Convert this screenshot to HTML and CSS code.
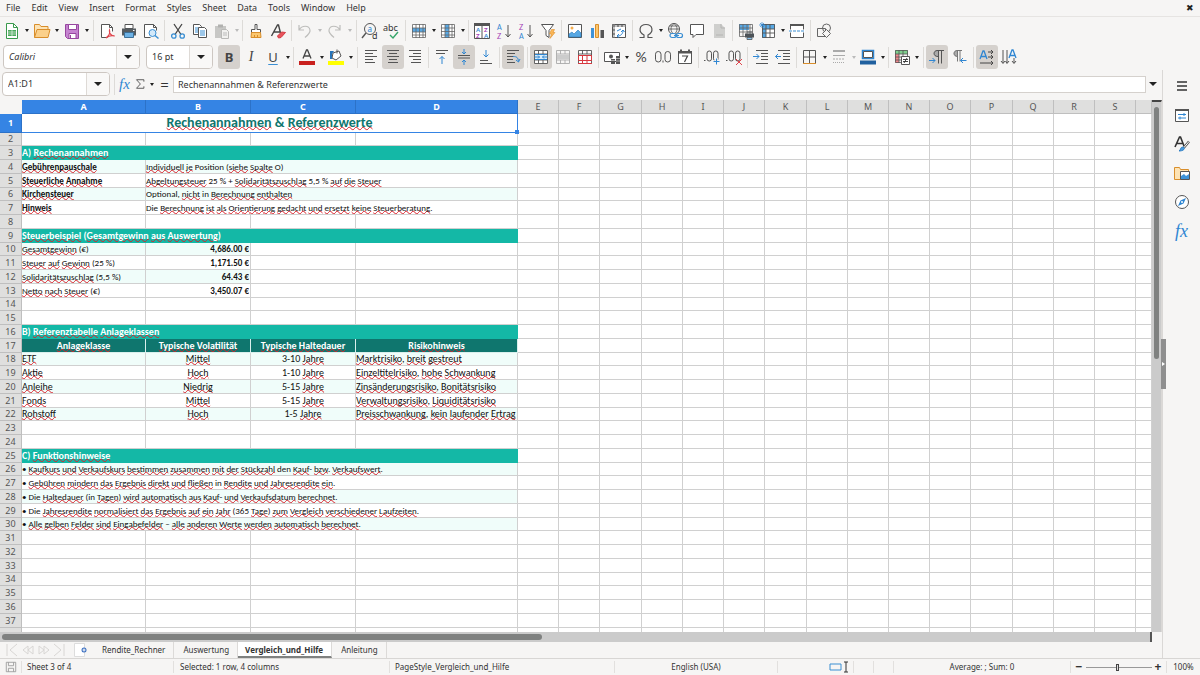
FILE: index.html
```html
<!DOCTYPE html>
<html lang="de">
<head>
<meta charset="utf-8">
<title>Vergleich_und_Hilfe</title>
<link rel="stylesheet" href="styles.css">
</head>
<body>
<div class="app">
<nav class="menubar">
  <button>File</button><button>Edit</button><button>View</button><button>Insert</button><button>Format</button><button>Styles</button><button>Sheet</button><button>Data</button><button>Tools</button><button>Window</button><button>Help</button>
  <button class="close" aria-label="Close">✖</button>
</nav>

<div class="toolbar" role="toolbar" aria-label="Standard">
  <button class="tb" aria-label="New"><svg viewBox="0 0 18 18"><path d="M3.500 1.500h7l4 4v11h-11z" fill="#fff" stroke="#3a9a4c"/><path d="M10.500 1.500v4h4" fill="none" stroke="#3a9a4c"/><path d="M5 8h8v6H5z" fill="#4aa95c"/><path d="M5 10h8M5 12h8M9 8v6" stroke="#fff" stroke-width=".6"/></svg></button><button class="drop wide" aria-label="New options"></button>
  <button class="tb" aria-label="Open"><svg viewBox="0 0 18 18"><path d="M1.500 15.500v-13h5l1.500 2h7v3" fill="#fde3b4" stroke="#d98e2b"/><path d="M1.500 15.500l2.500-8h13l-2 8z" fill="#fbd08a" stroke="#d98e2b"/></svg></button><button class="drop wide" aria-label="Open options"></button>
  <button class="tb" aria-label="Save"><svg viewBox="0 0 18 18"><path d="M2.500 2.500h13v14h-11l-2-2z" fill="#c583d0" stroke="#97479f"/><path d="M5.500 2.500h8v5h-8z" fill="#fff" stroke="#97479f"/><path d="M6 11.500h7v5H6z" fill="#fff" stroke="#97479f"/><path d="M7.500 13v3" stroke="#97479f"/></svg></button><button class="drop wide" aria-label="Save options"></button>
  <i class="sep"></i>
  <button class="tb" aria-label="Export as PDF"><svg viewBox="0 0 18 18"><path d="M9.500 15.500h-6v-13h8l3 3v4" fill="#fff" stroke="#555"/><path d="M11.500 2.500v3h3" fill="none" stroke="#555"/><path d="M8 16c4-3 4-6 3.500-7.500C11 11 13 14 16.500 14c-3-1-6 0-8.500 2z" fill="none" stroke="#e0444c" stroke-width="1.300"/></svg></button>
  <button class="tb" aria-label="Print"><svg viewBox="0 0 18 18"><path d="M5 2.500h8v4H5z" fill="#fff" stroke="#555"/><path d="M2 6.500h14v7H2z" fill="#555b60"/><path d="M4.500 10.500h9v5h-9z" fill="#6db2e6" stroke="#3d6f96"/><path d="M13 8.500h1.500" stroke="#fff"/></svg></button>
  <button class="tb" aria-label="Print preview"><svg viewBox="0 0 18 18"><path d="M8.500 15.500h-6v-13h9l3 3v3" fill="#fff" stroke="#555"/><path d="M11.500 2.500v3h3" fill="none" stroke="#555"/><circle cx="10.500" cy="11" r="3.500" fill="#d3e9fa" stroke="#3b8fd3"/><path d="M13 13.500l3.500 3" stroke="#3b8fd3" stroke-width="1.500"/></svg></button>
  <i class="sep"></i>
  <button class="tb" aria-label="Cut"><svg viewBox="0 0 18 18" fill="none"><path d="M5 2l7 10.500M13 2L6 12.500" stroke="#444" stroke-width="1.300"/><circle cx="4.800" cy="14" r="2.200" stroke="#3b8fd3" stroke-width="1.300"/><circle cx="13.200" cy="14" r="2.200" stroke="#3b8fd3" stroke-width="1.300"/></svg></button>
  <button class="tb" aria-label="Copy"><svg viewBox="0 0 18 18" fill="#fff"><path d="M2.500 2.500h6l2 2v8h-8z" stroke="#555"/><path d="M4 6h4M4 8h4M4 10h4" stroke="#3b8fd3"/><path d="M7.500 5.500h6l2 2v8h-8z" stroke="#555"/><path d="M9 9h5M9 11h5M9 13h5" stroke="#3b8fd3"/></svg></button>
  <button class="tb" aria-label="Paste" disabled><svg viewBox="0 0 18 18"><path d="M2 4h11v12H2z" fill="#c7c7c5"/><path d="M5 2.500h5v3H5z" fill="#b1b1af"/><path d="M8.500 7.500h5l2 2v7h-7z" fill="#f1f1ef" stroke="#b9b9b7"/><path d="M10 11h4M10 13h4" stroke="#bbb"/></svg></button><button class="drop" aria-label="Paste options" disabled></button>
  <i class="sep"></i>
  <button class="tb" aria-label="Clone formatting"><svg viewBox="0 0 18 18"><path d="M8 2.500h2v5h3.500v3h-9v-3H8z" fill="#fff" stroke="#555"/><path d="M4.500 10.500h9l.5 5h-10z" fill="#fbc76f" stroke="#d98e2b"/><path d="M7.500 13v2M10.500 13v2" stroke="#d98e2b"/></svg></button>
  <button class="tb" aria-label="Clear formatting"><svg viewBox="0 0 18 18" fill="none"><path d="M2.500 14L8.500 3h1l2 8M5 10h6" stroke="#444" stroke-width="1.400"/><path d="M8.500 14l4-4 4 .5-4.500 5-2.500.5z" fill="#e8545c" stroke="#d43a43"/></svg></button>
  <i class="sep"></i>
  <button class="tb" aria-label="Undo" disabled><svg viewBox="0 0 18 18" fill="none" stroke="#bdbdbb" stroke-width="1.200"><path d="M3 3v5h5M3 8c3-5 10-5 11 0 .5 3-2 5-5 7.500"/></svg></button><button class="drop wide" aria-label="Undo list" disabled></button>
  <button class="tb" aria-label="Redo" disabled><svg viewBox="0 0 18 18" fill="none" stroke="#bdbdbb" stroke-width="1.200"><path d="M14 3v5H9M14 8C11 3 4 3 3 8c-.5 3 2 5 5 7.500"/></svg></button><button class="drop wide" aria-label="Redo list" disabled></button>
  <i class="sep"></i>
  <button class="tb" aria-label="Find and replace"><svg viewBox="0 0 18 18" fill="none"><circle cx="9" cy="7" r="5.500" stroke="#555"/><path d="M5 11l-4 5" stroke="#555" stroke-width="1.400"/><text x="6.500" y="9.500" font-size="8" fill="#1f7fd0">a</text><text x="11" y="17" font-size="9" fill="#333">d</text></svg></button>
  <button class="tb" aria-label="Spelling"><svg viewBox="0 0 18 18" fill="none"><text x="0" y="9" font-size="9" fill="#333">abc</text><path d="M7 13l3 3 5-6" stroke="#35a56a" stroke-width="1.400"/></svg></button>
  <i class="sep"></i>
  <button class="tb" aria-label="Row"><svg viewBox="0 0 18 18" fill="none"><path d="M2.500 2.500h13v13h-13z" fill="#fff"/><path d="M2 6h14v4H2z" fill="#57a8e4"/><path d="M2.500 2.500h13v13h-13zM2 6h14M2 10h14M2 13h14M6 2v14M9.500 2v14M13 2v14" stroke="#666" stroke-width=".8"/></svg></button><button class="drop" aria-label="Row options"></button>
  <button class="tb" aria-label="Column"><svg viewBox="0 0 18 18" fill="none"><path d="M2.500 2.500h13v13h-13z" fill="#fff"/><path d="M6 2h4v14H6z" fill="#57a8e4"/><path d="M2.500 2.500h13v13h-13zM2 6h14M2 9.500h14M2 13h14M6 2v14M10 2v14M13 2v14" stroke="#666" stroke-width=".8"/></svg></button><button class="drop" aria-label="Column options"></button>
  <i class="sep"></i>
  <button class="tb" aria-label="Sort"><svg viewBox="0 0 18 18"><path d="M1.500 2.500h15v14h-15z" fill="#fff" stroke="#555"/><path d="M1 1h16v3H1z" fill="#555"/><path d="M9 4v12" stroke="#555"/><g class="letters small"><text x="3" y="10" fill="#2f86d2">A</text><text x="3" y="16" fill="#a43fb5">Z</text><text x="11" y="10" fill="#a43fb5">Z</text><text x="11" y="16" fill="#2f86d2">A</text></g></svg></button>
  <button class="tb" aria-label="Sort ascending"><svg viewBox="0 0 18 18" fill="none"><g class="letters"><text x="2" y="8" fill="#2f86d2">A</text><text x="2" y="17" fill="#a43fb5">Z</text></g><path d="M13 3v12M10.500 12l2.500 3 2.500-3" stroke="#555"/></svg></button>
  <button class="tb" aria-label="Sort descending"><svg viewBox="0 0 18 18" fill="none"><g class="letters"><text x="2" y="8" fill="#a43fb5">Z</text><text x="2" y="17" fill="#2f86d2">A</text></g><path d="M13 3v12M10.500 12l2.500 3 2.500-3" stroke="#555"/></svg></button>
  <button class="tb" aria-label="AutoFilter"><svg viewBox="0 0 18 18"><path d="M2.500 2.500h12L10 8.500v7l-3-2v-5z" fill="#fff" stroke="#555"/><path d="M12.500 7.500h3l-1.500 3h2l-5 6 1.500-4.500h-2z" fill="#fbb757" stroke="#dd8f2c" stroke-width=".6"/></svg></button>
  <i class="sep"></i>
  <button class="tb" aria-label="Insert image"><svg viewBox="0 0 18 18"><path d="M2.500 2.500h13v13h-13z" fill="#fff" stroke="#555"/><circle cx="6" cy="6" r="1.500" fill="#f5ad4e"/><path d="M3 15v-3l3-2 2 2 4-4 3 3v4z" fill="#57a8e4" stroke="#2778bd" stroke-width=".6"/></svg></button>
  <button class="tb" aria-label="Insert chart"><svg viewBox="0 0 18 18"><path d="M3 6h3v10H3z" fill="#3f93d8"/><path d="M7.500 2.500h3v13h-3z" fill="#fbc76f" stroke="#d98e2b"/><path d="M12.500 8H16v8h-3.500z" fill="#555"/></svg></button>
  <button class="tb" aria-label="Pivot table"><svg viewBox="0 0 18 18" fill="none"><path d="M2.500 2.500h13v13h-13z" fill="#fff" stroke="#555"/><path d="M2.500 4h13M4 2.500v13" stroke="#888" stroke-width="2" stroke-dasharray="3 1"/><path d="M7 14c4 0 6-2 6-6M7 14l2-2M7 14l2 1.500M13 8l-2 2M13 8l1.500 2M7 9l4-2" stroke="#2f86d2"/></svg></button>
  <i class="sep"></i>
  <button class="tb" aria-label="Special character"><svg viewBox="0 0 18 18" fill="none" stroke="#555" stroke-width="1.200"><path d="M2.500 15.500H7V13C1 10 2 2.500 9 2.500S17 10 11 13v2.500h4.500"/></svg></button><button class="drop" aria-label="Character options"></button>
  <button class="tb" aria-label="Hyperlink"><svg viewBox="0 0 18 18" fill="none"><circle cx="8" cy="7" r="5.500" stroke="#555"/><path d="M2.500 7h11M3.500 4h9M8 1.500c-4 3-4 8 0 11M8 1.500c4 3 4 8 0 11" stroke="#555" stroke-width=".8"/><rect x="4" y="11.500" width="6" height="4" rx="2" fill="#f6f5f4" stroke="#3b8fd3" stroke-width="1.200"/><rect x="10.500" y="11.500" width="6" height="4" rx="2" fill="#f6f5f4" stroke="#3b8fd3" stroke-width="1.200"/><path d="M8 13.500h5" stroke="#3b8fd3"/></svg></button>
  <button class="tb" aria-label="Comment"><svg viewBox="0 0 18 18"><path d="M2.500 2.500h13v10H8l-3 3v-3H2.500z" fill="#fff" stroke="#555"/></svg></button>
  <button class="tb" aria-label="Headers and footers" disabled><svg viewBox="0 0 18 18"><path d="M4 2h7l4 4v10H4z" fill="#cfcfcd"/><path d="M11 2v4h4M6 13h7" fill="none" stroke="#b5b5b3"/></svg></button>
  <i class="sep"></i>
  <button class="tb" aria-label="Print area"><svg viewBox="0 0 18 18" fill="none"><path d="M2 2h10v6H2z" fill="#57a8e4"/><path d="M2.500 2.500h13v12h-13zM2 6h14M2 10h14M6 2v13M10 2v13M13 2v13" stroke="#666" stroke-width=".8"/><path d="M8 11.500h9v4H8z" fill="#4d5358"/><path d="M10 10h5M10 15.500h5v2h-5z" fill="#8cc3ec" stroke="#4d5358" stroke-width=".8"/></svg></button>
  <button class="tb" aria-label="Freeze rows and columns"><svg viewBox="0 0 18 18" fill="none"><path d="M3 2h13v5H7v9H3z" fill="#57a8e4"/><path d="M7 7h9v9H7z" fill="#fff"/><path d="M3.500 2.500h12v13h-12zM3 7h13M3 11h13M7 2v14M11 2v14" stroke="#555" stroke-width=".9"/><path d="M3 0v6M0 3h6M1 1l4 4M5 1L1 5" stroke="#2f86d2" stroke-width=".7"/></svg></button><button class="drop" aria-label="Freeze options"></button>
  <button class="tb" aria-label="Split window"><svg viewBox="0 0 18 18" fill="none"><path d="M2.500 2.500h13v13h-13z" fill="#fff" stroke="#555"/><path d="M2 3h14" stroke="#555" stroke-width="2"/><path d="M1 9h16" stroke="#fff" stroke-width="3"/><path d="M1 9h16" stroke="#3b8fd3" stroke-dasharray="3 1"/></svg></button>
  <i class="sep"></i>
  <button class="tb" aria-label="Draw functions"><svg viewBox="0 0 18 18" fill="none" stroke="#666"><path d="M2.500 6.500h8v8h-8z"/><circle cx="11.500" cy="6" r="4"/><path d="M11.500 7.500l4 4-4 4-4-4z" fill="#f6f5f4"/></svg></button>
</div>

<div class="toolbar formatting" role="toolbar" aria-label="Formatting">
  <div class="combo font"><input class="italic" aria-label="Font name" value="Calibri"><button aria-label="Font list"></button></div>
  <div class="combo size"><input aria-label="Font size" value="16 pt"><button aria-label="Size list"></button></div>
  <button class="tb on" aria-label="Bold"><b class="glyph">B</b></button>
  <button class="tb" aria-label="Italic"><em class="glyph serif">I</em></button>
  <button class="tb" aria-label="Underline"><u class="glyph">U</u></button><button class="drop" aria-label="Underline options"></button>
  <i class="sep"></i>
  <button class="tb" aria-label="Font color"><svg viewBox="0 0 18 18" fill="none"><path d="M5 10.500L8.500 2h1l3.500 8.500M6 8h6" stroke="#444" stroke-width="1.300"/><path d="M1 13h16v4H1z" fill="#c9211e"/></svg></button><button class="drop" aria-label="Font color options"></button>
  <button class="tb" aria-label="Background color"><svg viewBox="0 0 18 18"><path d="M6 5l6-2 2 5-5 4-4-2z" fill="#fff" stroke="#555"/><path d="M10 1.500v4" stroke="#555"/><path d="M3 3h4L5 6v5H3z" fill="#2874b8"/><path d="M1 13h16v4H1z" fill="#ff0"/></svg></button><button class="drop" aria-label="Background color options"></button>
  <i class="sep wide"></i>
  <button class="tb" aria-label="Align left"><svg viewBox="0 0 18 18" stroke="#555"><path d="M3 2.500h12M3 5.500h8M3 8.500h12M3 11.500h8M3 14.500h10"/></svg></button>
  <button class="tb on" aria-label="Align center"><svg viewBox="0 0 18 18" stroke="#555"><path d="M3 2.500h12M5 5.500h8M3 8.500h12M5 11.500h8M4 14.500h10"/></svg></button>
  <button class="tb" aria-label="Align right"><svg viewBox="0 0 18 18" stroke="#555"><path d="M3 2.500h12M7 5.500h8M3 8.500h12M7 11.500h8M5 14.500h10"/></svg></button>
  <i class="sep"></i>
  <button class="tb" aria-label="Align top"><svg viewBox="0 0 18 18" fill="none"><path d="M3 2.500h12M3 5.500h9" stroke="#555"/><path d="M9 16V8.500M6.500 11L9 8.500l2.500 2.500" stroke="#2f86d2"/></svg></button>
  <button class="tb on" aria-label="Center vertically"><svg viewBox="0 0 18 18" fill="none"><path d="M3 7.500h12M3 10h12" stroke="#555"/><path d="M9 1v5M7 4l2 2 2-2M9 17v-5M7 14l2-2 2 2" stroke="#2f86d2"/></svg></button>
  <button class="tb" aria-label="Align bottom"><svg viewBox="0 0 18 18" fill="none"><path d="M3 12.500h8M3 15.500h12" stroke="#555"/><path d="M9 2v7M6.500 6.500L9 9l2.500-2.500" stroke="#2f86d2"/></svg></button>
  <i class="sep"></i>
  <button class="tb on" aria-label="Wrap text"><svg viewBox="0 0 18 18" fill="none"><path d="M3 2.500h12M3 5.500h8M3 8.500h6M3 11.500h6M3 14.500h8" stroke="#555"/><path d="M9 8.500c4 0 5 1 5.500 5M12 12l2.500 2 1.500-3" stroke="#2f86d2"/></svg></button>
  <i class="sep wide"></i>
  <button class="tb on" aria-label="Merge and center"><svg viewBox="0 0 18 18" fill="none"><path d="M2.500 2.500h13v13h-13z" fill="#fff"/><path d="M2 6h14v6H2z" fill="#d8ecfa"/><path d="M2.500 2.500h13v13h-13zM2 6h14M2 12h14M6.500 2v4M11 2v4M6.500 12v4M11 12v4" stroke="#555" stroke-width=".9"/><path d="M2.500 9h5M10.500 9h5M6 7.500L7.500 9 6 10.500M12 7.500L10.500 9l1.500 1.500M3 6.500h12M3 11.500h12" stroke="#2f86d2"/></svg></button>
  <button class="tb" aria-label="Merge cells" disabled><svg viewBox="0 0 18 18" fill="none"><path d="M2.500 2.500h13v13h-13zM2 6h14M2 12h14M6.500 2v4M11 2v4M6.500 12v4M11 12v4" stroke="#aaa" stroke-width=".9"/><path d="M3 7h12v4H3z" fill="#ccc"/></svg></button>
  <button class="tb" aria-label="Unmerge cells"><svg viewBox="0 0 18 18" fill="none"><path d="M2.500 2.500h13v13h-13zM2 6h14M6.500 2v4M11 2v4" fill="#fff" stroke="#555" stroke-width=".9"/><path d="M2.500 7.500h13v5h-13zM6.500 7v9M11 7v9M2 15.500h14" stroke="#d8383f"/></svg></button>
  <i class="sep"></i>
  <button class="tb" aria-label="Currency format"><svg viewBox="0 0 18 18"><path d="M1.500 4.500h15v9h-15z" fill="#fff" stroke="#555"/><circle cx="8" cy="8.500" r="2" fill="#555"/><path d="M8 11h4v5H8zM13 8h4v8h-4z" fill="#555"/><path d="M8 12.500h4M13 10.500h4M13 13h4" stroke="#ccc" stroke-width=".7"/></svg></button><button class="drop" aria-label="Currency options"></button>
  <button class="tb" aria-label="Percent"><span class="glyph thin">%</span></button>
  <button class="tb" aria-label="Number"><svg viewBox="0 0 18 18" fill="none" stroke="#555"><rect x="1.500" y="3.500" width="5.500" height="10.500" rx="2.700"/><path d="M9 12.500v2"/><rect x="11" y="3.500" width="5.500" height="10.500" rx="2.700"/></svg></button>
  <button class="tb" aria-label="Date"><svg viewBox="0 0 18 18"><path d="M2.500 3.500h13v12h-13z" fill="#fff" stroke="#555"/><path d="M2 3h14v2.500H2zM4 1.500h2V4H4zM12 1.500h2V4h-2z" fill="#555"/><path d="M6 8h5.500L8.500 14" fill="none" stroke="#444" stroke-width="1.200"/></svg></button>
  <i class="sep"></i>
  <button class="tb" aria-label="Add decimal place"><svg viewBox="0 0 18 18" fill="none"><path d="M1 12.500h1.500" stroke="#555"/><rect x="4" y="3" width="4.500" height="10" rx="2.200" stroke="#555"/><rect x="10.500" y="3" width="4.500" height="10" rx="2.200" stroke="#555"/><path d="M13.500 10v7M10 13.500h7" stroke="#f6f5f4" stroke-width="2.500"/><path d="M13.500 10.500v6M10.500 13.500h6" stroke="#2f86d2"/></svg></button>
  <button class="tb" aria-label="Delete decimal place"><svg viewBox="0 0 18 18" fill="none"><path d="M1 12.500h1.500" stroke="#555"/><rect x="4" y="3" width="4.500" height="10" rx="2.200" stroke="#555"/><rect x="10.500" y="3" width="4.500" height="10" rx="2.200" stroke="#555"/><path d="M11 11l6 6M17 11l-6 6" stroke="#e0444c"/></svg></button>
  <i class="sep"></i>
  <button class="tb" aria-label="Increase indent"><svg viewBox="0 0 18 18" fill="none"><path d="M4 2.500h12M9 5.500h7M9 8.500h7M9 11.500h7M4 15.500h12" stroke="#555"/><path d="M1 8.500h6M4.500 6L7 8.500 4.500 11" stroke="#2f86d2"/></svg></button>
  <button class="tb" aria-label="Decrease indent"><svg viewBox="0 0 18 18" fill="none"><path d="M4 2.500h12M9 5.500h7M9 8.500h7M9 11.500h7M4 15.500h12" stroke="#555"/><path d="M1.500 8.500H7M4 6L1.500 8.500 4 11" stroke="#2f86d2"/></svg></button>
  <i class="sep"></i>
  <button class="tb" aria-label="Borders"><svg viewBox="0 0 18 18" fill="none"><path d="M2.500 15V2.500h12V15M8.500 2.500v13M2.500 9h12" stroke="#555"/><path d="M2 15.500h13" stroke="#d98e2b"/></svg></button><button class="drop" aria-label="Border options"></button>
  <button class="tb" aria-label="Border style" disabled><svg viewBox="0 0 18 18" stroke="#aaa"><path d="M3 3h12" stroke-width="2"/><path d="M3 7.500h12"/><path d="M3 11h12" stroke-dasharray="2 1"/><path d="M3 14.500h12" stroke-dasharray="1 1"/></svg></button><button class="drop" aria-label="Border style options" disabled></button>
  <button class="tb" aria-label="Border color"><svg viewBox="0 0 18 18"><path d="M3.500 2.500h11v8h-11z" fill="#fff" stroke="#2f86d2" stroke-width="1.500"/><path d="M4.500 3.500h9v6h-9z" fill="none" stroke="#555"/><path d="M1 12.500h16v4H1z" fill="#20609f"/></svg></button><button class="drop" aria-label="Border color options"></button>
  <i class="sep"></i>
  <button class="tb" aria-label="Conditional formatting"><svg viewBox="0 0 18 18" fill="none"><path d="M2 2h13v4H2z" fill="#7fd08d"/><path d="M2 6h4v9H2z" fill="#f0878c"/><path d="M2.500 2.500h12v12h-12zM2 6h13M2 9h13M2 12h13M6 2v13M10 2v13" stroke="#555" stroke-width=".8"/><path d="M8.500 8.500h8v8h-8z" fill="#fff" stroke="#555"/><path d="M10 11.500h5M10 13.500h5M14 10l-3 5" stroke="#333" stroke-width=".9"/></svg></button><button class="drop" aria-label="Conditional options"></button>
  <i class="sep wide"></i>
  <button class="tb on" aria-label="Left to right"><svg viewBox="0 0 18 18" fill="none"><path d="M10 9C4 9 4 2 10 2z" fill="#aaa"/><path d="M16 2.500H9C5 3 5 8.500 10 8.500M10.500 2.500v13M13.500 2.500v13" stroke="#555"/><path d="M1 12.500h6M4.500 10L7 12.500 4.500 15" stroke="#2f86d2"/></svg></button>
  <button class="tb" aria-label="Right to left"><svg viewBox="0 0 18 18" fill="none"><path d="M8 9C2 9 2 2 8 2z" fill="#aaa"/><path d="M12 2.500H7C3 3 3 8.500 8 8.500M7.500 2.500v11M10 2.500v11" stroke="#777"/><path d="M10.500 12.500h6M13 10l-2.500 2.500L13 15" stroke="#2f86d2"/></svg></button>
  <i class="sep wide"></i>
  <button class="tb on" aria-label="Horizontal text"><svg viewBox="0 0 18 18" fill="none"><path d="M2 11L5 3h1l3 8M3 8.500h5" stroke="#2f86d2" stroke-width="1.300"/><path d="M10 4h5M10 9h5M2 15h13M13 2l2 2-2 2M13 7l2 2-2 2M13 13l2 2-2 2" stroke="#444"/></svg></button>
  <button class="tb" aria-label="Vertical text"><svg viewBox="0 0 18 18" fill="none"><path d="M9 10l3-8h1l3 8M10 7.500h5" stroke="#2f86d2" stroke-width="1.300"/><path d="M3 2v13M7 2v13M14 10v5M1 13l2 2.500L5 13M5.500 13L7 15.500 9 13M12 13l2 2.500 2-2.500" stroke="#555"/></svg></button>
</div>

<div class="middle">
  <main class="work">
    <div class="formulabar">
      <div class="combo name"><input aria-label="Name box" value="A1:D1"><button aria-label="Name list"></button></div>
      <i class="sep"></i>
      <button class="tb fx" aria-label="Function wizard">fx</button>
      <button class="tb" aria-label="Select function"><svg viewBox="0 0 18 18" fill="none" stroke="#555" stroke-width="1.200"><path d="M14 6V3.500H4.500l5 5.500-5 5.500H14V12"/></svg></button><button class="drop" aria-label="Function options"></button>
      <button class="tb eq" aria-label="Formula">=</button>
      <input class="formula" aria-label="Input line" value="Rechenannahmen &amp; Referenzwerte">
      <button class="drop expand" aria-label="Expand formula bar"></button>
    </div>
    <div class="gridarea">
      <div class="sheetwrap"><table class="sheet" id="sheet"></table></div>
      <div class="vscroll"><i></i></div>
    </div>
    <div class="hscroll"><i></i></div>
    <div class="tabs">
      <div class="tabnav">
        <button aria-label="First sheet"><svg viewBox="0 0 14 14"><path d="M2 1v12M12 1L5 7l7 6"/></svg></button><button aria-label="Previous sheet"><svg viewBox="0 0 14 14"><path d="M7 3L2 7l5 4V3M12 3L7 7l5 4V3"/></svg></button><button aria-label="Next sheet"><svg viewBox="0 0 14 14"><path d="M2 3l5 4-5 4V3M7 3l5 4-5 4V3"/></svg></button><button aria-label="Last sheet"><svg viewBox="0 0 14 14"><path d="M2 1l7 6-7 6M12 1v12"/></svg></button>
      </div>
      <button class="addtab" aria-label="Add sheet"><svg viewBox="0 0 14 14"><path d="M.5.500h10v13H.5z" fill="#fff" stroke="#ddd"/><circle cx="10" cy="7" r="2.500" fill="#3b6fc0"/><path d="M10 5.500v3M8.500 7h3" stroke="#fff"/></svg></button>
      <button class="tab">Rendite_Rechner</button><button class="tab">Auswertung</button><button class="tab current">Vergleich_und_Hilfe</button><button class="tab">Anleitung</button>
    </div>
  </main>
  <aside class="sidebar">
    <button aria-label="Sidebar settings"><svg viewBox="0 0 18 18"><path d="M4 5h10M4 9h10M4 13h10" stroke="#333" stroke-width="1.500"/></svg></button>
    <button aria-label="Properties"><svg viewBox="0 0 18 18" fill="none"><path d="M2.500 3.500h13v12h-13z" fill="#fff" stroke="#555"/><path d="M2 3h14v2H2z" fill="#555"/><path d="M5 8.500h8M5 12h8M11 7v3M7 10.500v3" stroke="#2f86d2"/></svg></button>
    <button aria-label="Styles"><svg viewBox="0 0 18 18" fill="none"><path d="M2 12L6.500 2h1L11 11M4 8.500h6" stroke="#333" stroke-width="1.600"/><path d="M16 6.500l-5 6" stroke="#555" stroke-width="2.500"/><path d="M16 6.500l-5 6" stroke="#fff"/><path d="M6 16c2-1 1-4 4-4 3 1 1 4-4 4z" fill="#4d9ee0" stroke="#2f7fc4"/></svg></button>
    <button aria-label="Gallery"><svg viewBox="0 0 18 18"><path d="M1.500 15.500v-12h5l1 2h8v10z" fill="#fde3b4" stroke="#d98e2b"/><path d="M7.500 7.500h9v8h-9z" fill="#fff" stroke="#555"/><path d="M8 15v-3l3-2 2 2 3-2v5z" fill="#3f93d8"/></svg></button>
    <button aria-label="Navigator"><svg viewBox="0 0 18 18"><circle cx="9" cy="9" r="6.500" fill="#fff" stroke="#555"/><path d="M13 5l-2.500 5.500L5 13l2.500-5.500z" fill="#2f86d2"/><circle cx="9" cy="9" r="1" fill="#fff"/></svg></button>
    <button class="fx" aria-label="Functions">fx</button>
    <button class="handle" aria-label="Hide sidebar"></button>
  </aside>
</div>

<footer class="status">
  <span class="disk"><svg viewBox="0 0 14 14" fill="none" stroke="#999"><path d="M1.500 1.500h11v11h-11zM4 1.500v4h6v-4M4 12.500v-4h6v4"/></svg></span>
  <span class="s-sheet">Sheet 3 of 4</span>
  <span class="s-sel">Selected: 1 row, 4 columns</span>
  <span class="s-style">PageStyle_Vergleich_und_Hilfe</span>
  <span class="s-lang">English (USA)</span>
  <span class="s-mode"><svg viewBox="0 0 20 12" fill="none"><path d="M1 3h11v6H1z" stroke="#3b8fd3"/><path d="M15 1h4M17 1v10M15 11h4" stroke="#333"/></svg></span>
  <span class="s-blank"></span>
  <span class="s-blank"></span>
  <span class="s-sum">Average: ; Sum: 0</span>
  <span class="s-zoom"><button aria-label="Zoom out">−</button><input type="range" aria-label="Zoom" value="49"><button aria-label="Zoom in">+</button></span>
  <span class="s-pct">100%</span>
</footer>
</div>
<script src="sheet.js"></script>
</body>
</html>
```
FILE: styles.css
```css
* { box-sizing: border-box; }
body { margin: 0; background: #f6f5f4; color: #333; font: 9px/12px "Noto Sans", sans-serif; }
button, input { font: inherit; color: inherit; margin: 0; padding: 0; border: 0; background: none; min-width: 0; }
i { font-style: normal; }
.app { display: flex; flex-direction: column; height: 100vh; overflow: hidden; }

.menubar { display: flex; align-items: center; height: 17px; padding-left: 6px; gap: 11px; border-bottom: 1px solid #e6e4e2; flex: none; }
.menubar .close { margin-left: auto; margin-right: 6px; color: #222; }

.toolbar { display: flex; align-items: center; height: 27px; padding-left: 1px; flex: none; }
.toolbar.formatting { height: 26px; }
.tb { width: 22px; height: 24px; display: flex; align-items: center; justify-content: center; border-radius: 3px; flex: none; }
.tb svg { width: 18px; height: 18px; overflow: visible; flex: none; }
.letters { font: 7px Lato, sans-serif; }
.letters.small { font-size: 6px; font-weight: 700; }
.on { background: #d5d1cd; }
.drop { width: 7px; height: 20px; display: flex; align-items: center; justify-content: center; flex: none; }
.drop.wide { width: 8px; }
.drop::before, .combo button::before { content: ""; border: 2px solid transparent; border-top: 3px solid #222; border-bottom: 0; }
.drop:disabled::before { border-top-color: #bbb; }
.sep { width: 5px; height: 21px; flex: none; background: linear-gradient(#dddbd8, #dddbd8) center / 1px 100% no-repeat; }
.sep.wide { width: 6px; }
.glyph { font-size: 13px; line-height: 20px; color: #444; }
u.glyph { text-decoration-color: #3b8fd3; text-decoration-thickness: 1px; text-underline-offset: 2px; }
.serif { font-family: "Liberation Serif", serif; font-size: 14px; }
.thin { font-family: Lato, sans-serif; font-size: 14px; }

.combo { display: flex; height: 24px; border: 1px solid #cdc7c2; border-radius: 4px; background: #fff; overflow: hidden; flex: none; }
.combo input { flex: 1; padding-left: 5px; }
.combo button { width: 23px; display: flex; align-items: center; justify-content: center; border-left: 1px solid #dedad6; background: #f9f8f7; }
.combo button::before { border-width: 4px 4px 0; }
.italic { font-style: italic; }
.font { width: 137px; margin: 0 6px 0 2px; }
.size { width: 67px; margin-right: 5px; }
.name { width: 108px; margin-right: 2px; }

.middle { display: flex; flex: 1; min-height: 0; }
.work { display: flex; flex-direction: column; flex: 1; min-width: 0; }
.formulabar { display: flex; align-items: center; height: 30px; padding: 0 0 2px 2px; flex: none; }
.fx { font: italic 15px/18px "Liberation Serif", serif; color: #2f86d2; }
.formulabar .tb { width: 15px; }
.formulabar .tb svg { width: 14px; height: 14px; }
.formulabar .drop { width: 9px; }
.formulabar .eq { width: 17px; font-size: 15px; }
.formula { flex: 1; height: 17px; border: 1px solid #d5d1cd; background: #fff; padding-left: 4px; }
.formulabar .expand { width: 14px; }
.expand::before { border-width: 4px 4px 0; }
.formulabar { padding-right: 2px; }

.gridarea { display: flex; flex: 1; min-height: 0; }
.sheetwrap { flex: 1; min-width: 0; overflow: hidden; background: #fff; }
.vscroll { width: 10px; background: #cbcbcb; padding: 5px 2px 0 2px; border-right: 1px solid #dad8d6; border-top: 2px solid #444; }
.vscroll i { display: block; height: 48%; border-radius: 3px; background: #7f8180; }
.hscroll { height: 10px; background: #cbcbcb; padding: 2px 0 0 2px; margin-right: 10px; border-right: 2px solid #555; flex: none; }
.hscroll i { display: block; width: 47%; height: 6px; border-radius: 3px; background: #7f8180; }

.sheet { width: 100%; table-layout: fixed; border-collapse: separate; border-spacing: 0; }
.c-head { width: 22px; } .c-a { width: 124px; } .c-b { width: 105px; } .c-c { width: 105px; } .c-d { width: 162px; } .c-n { width: 41px; } .c-w { width: 42px; }
.sheet th { background: #dfdfde; font-weight: 400; color: #555; border: solid #bfbfbf; border-width: 0 1px 1px 0; padding: 0; line-height: 12px; }
.sheet thead th.sel, .sheet tbody th.sel { background: #3584e4; color: #fff; font-weight: 700; border-color: #2c72c8; }
.sheet thead th:first-child { background: #f6f5f4; border-color: #f6f5f4; }
.sheet tr { height: 14px; }
.sheet tbody tr:nth-child(4n + 2) { height: 13px; }
.sheet tbody tr.title { height: 19px; }
.sheet td { border: solid #d0d0d0; border-width: 0 1px 1px 0; padding: 0; font-family: Carlito, Lato, sans-serif; font-size: 9px; color: #111; white-space: nowrap; }
.sheet td div { height: 12px; line-height: 12px; overflow: hidden; }
.sheet tr.title td { position: relative; text-align: center; font-size: 14px; font-weight: 700; color: #0f766e; border-color: #3584e4; }
.sheet tr.title td div { height: 17px; line-height: 16px; }
.sheet tr.title td.blank { border-color: #d0d0d0; }
.fill { position: absolute; right: -2px; bottom: -2px; width: 4px; height: 4px; background: #3584e4; z-index: 1; }
.sheet td.section { background: #14b8a6; border-color: #14b8a6; color: #fff; font-size: 10px; font-weight: 700; }
.sheet td.head { background: #0f766e; border-color: #d9efec; color: #fff; font-size: 10px; font-weight: 700; text-align: center; }
.sheet td.mint { background: #f0fdfa; }
.sheet td.bold { font-weight: 700; }
.sheet td.center { text-align: center; }
.sheet td.right { text-align: right; padding-right: 1px; }
.sheet td.big { font-size: 10px; }
.miss { text-decoration: underline wavy #d8202a 1px; text-decoration-skip-ink: none; text-underline-offset: -1px; }

.tabs { display: flex; height: 16px; align-items: stretch; padding-left: 5px; font-size: 8px; flex: none; }
.tabnav { display: flex; width: 63px; }
.tabnav button { flex: 1; display: flex; align-items: center; }
.tabnav svg { width: 14px; height: 14px; fill: none; stroke: #d8d6d4; }
.addtab { width: 25px; display: flex; align-items: center; justify-content: center; }
.addtab svg { width: 14px; height: 14px; }
.tab { padding: 0 8px 0 9px; border-right: 1px solid #dcdad8; }
.tab.current { font-weight: 700; background: #fff; border-bottom: 2px solid #7f8180; padding: 2px 8px 0 7px; }

.sidebar { position: relative; width: 38px; display: flex; flex-direction: column; align-items: center; padding-top: 1px; border-left: 1px solid #dad8d6; flex: none; }
.sidebar button { height: 29px; display: flex; align-items: center; }
.sidebar svg { width: 18px; height: 18px; }
.sidebar .fx { font: italic 18px/20px "Liberation Serif", serif; }
.sidebar .handle { position: absolute; left: -2px; top: 269px; width: 5px; height: 50px; background: #8f8f8f; justify-content: center; }
.handle::before { content: ""; border: 2px solid transparent; border-left: 3px solid #fff; border-right: 0; }

.status { display: flex; height: 17px; align-items: center; border-top: 1px solid #d8d6d4; font-size: 8px; flex: none; }
.status > span { display: flex; align-items: center; height: 12px; border-right: 1px solid #e2e0de; }
.disk { width: 22px; justify-content: center; }
.disk svg { width: 12px; height: 12px; }
.s-sheet { width: 152px; padding-left: 5px; }
.s-sel { width: 216px; padding-left: 6px; }
.s-style { width: 225px; padding-left: 5px; }
.s-lang { width: 163px; justify-content: center; }
.s-mode { width: 76px; padding-left: 51px; }
.s-mode svg { width: 20px; height: 12px; }
.s-blank { width: 20px; }
.s-sum { flex: 1; justify-content: center; }
.s-zoom { width: 96px; justify-content: center; gap: 3px; font-weight: 700; font-size: 12px; }
.status .s-pct { width: 33px; justify-content: center; border: 0; }
.s-zoom input { width: 66px; height: 10px; appearance: none; background: linear-gradient(#999, #999) center / 100% 1px no-repeat; }
.s-zoom input::-webkit-slider-thumb { appearance: none; width: 3px; height: 7px; background: #ddd; border: 1px solid #444; }
```
FILE: sheet.js
```js
const COLS = "ABCDEFGHIJKLMNOPQRST".split("");
const WIDE = ["G", "K", "P"];
const LAST_ROW = 37;
const known = new Set(["Die", "in", "den", "Position", "Optional"]);

// Each row lists its cells as [text, class, colspan].
const rows = {
  1: [["Rechenannahmen & Referenzwerte", "", 4]],
  3: [["A) Rechenannahmen", "section", 4]],
  4: [["Gebührenpauschale", "mint bold"], ["Individuell je Position (siehe Spalte O)", "mint", 3]],
  5: [["Steuerliche Annahme", "bold"], ["Abgeltungsteuer 25 % + Solidaritätszuschlag 5,5 % auf die Steuer", "", 3]],
  6: [["Kirchensteuer", "mint bold"], ["Optional, nicht in Berechnung enthalten", "mint", 3]],
  7: [["Hinweis", "bold"], ["Die Berechnung ist als Orientierung gedacht und ersetzt keine Steuerberatung.", "", 3]],
  9: [["Steuerbeispiel (Gesamtgewinn aus Auswertung)", "section", 4]],
  10: [["Gesamtgewinn (€)", "mint"], ["4,686.00 €", "mint bold right"]],
  11: [["Steuer auf Gewinn (25 %)", ""], ["1,171.50 €", "bold right"]],
  12: [["Solidaritätszuschlag (5,5 %)", "mint"], ["64.43 €", "mint bold right"]],
  13: [["Netto nach Steuer (€)", ""], ["3,450.07 €", "bold right"]],
  16: [["B) Referenztabelle Anlageklassen", "section", 4]],
  17: [["Anlageklasse", "head"], ["Typische Volatilität", "head"], ["Typische Haltedauer", "head"], ["Risikohinweis", "head"]],
  25: [["C) Funktionshinweise", "section", 4]],
  26: [["• Kaufkurs und Verkaufskurs bestimmen zusammen mit der Stückzahl den Kauf- bzw. Verkaufswert.", "mint", 4]],
  27: [["• Gebühren mindern das Ergebnis direkt und fließen in Rendite und Jahresrendite ein.", "", 4]],
  28: [["• Die Haltedauer (in Tagen) wird automatisch aus Kauf- und Verkaufsdatum berechnet.", "mint", 4]],
  29: [["• Die Jahresrendite normalisiert das Ergebnis auf ein Jahr (365 Tage) zum Vergleich verschiedener Laufzeiten.", "", 4]],
  30: [["• Alle gelben Felder sind Eingabefelder – alle anderen Werte werden automatisch berechnet.", "mint", 4]]
};
[
  ["ETF", "Mittel", "3-10 Jahre", "Marktrisiko, breit gestreut"],
  ["Aktie", "Hoch", "1-10 Jahre", "Einzeltitelrisiko, hohe Schwankung"],
  ["Anleihe", "Niedrig", "5-15 Jahre", "Zinsänderungsrisiko, Bonitätsrisiko"],
  ["Fonds", "Mittel", "5-15 Jahre", "Verwaltungsrisiko, Liquiditätsrisiko"],
  ["Rohstoff", "Hoch", "1-5 Jahre", "Preisschwankung, kein laufender Ertrag"]
].forEach((r, i) => {
  const tint = i % 2 ? "big" : "big mint";
  rows[18 + i] = r.map((t, c) => [t, c === 1 || c === 2 ? tint + " center" : tint]);
});

const mark = text => text.replace(/&/g, "&amp;").replace(/\p{L}{2,}/gu, w =>
  known.has(w) || w === "amp" ? w : `<span class="miss">${w}</span>`);

const widths = COLS.map(c => "ABCD".includes(c) ? "c-" + c.toLowerCase() : c === "T" ? "" : WIDE.includes(c) ? "c-w" : "c-n");
let html = '<colgroup><col class="c-head">' + widths.map(w => `<col class="${w}">`).join("") + "</colgroup>";
html += "<thead><tr><th></th>" + COLS.map((c, i) => `<th class="${i < 4 ? "sel" : ""}">${c === "T" ? "" : c}</th>`).join("") + "</tr></thead><tbody>";
for (let r = 1; r <= LAST_ROW + 1; r++) {
  html += `<tr class="${r === 1 ? "title" : ""}"><th class="${r === 1 ? "sel" : ""}">${r > LAST_ROW ? "" : r}</th>`;
  let used = 0;
  for (const [text, cls, span = 1] of rows[r] || []) {
    html += `<td class="${cls}" colspan="${span}"><div>${mark(text)}</div>${r === 1 ? '<i class="fill"></i>' : ""}</td>`;
    used += span;
  }
  html += '<td class="blank"></td>'.repeat(COLS.length - used) + "</tr>";
}
document.getElementById("sheet").innerHTML = html + "</tbody>";
```
